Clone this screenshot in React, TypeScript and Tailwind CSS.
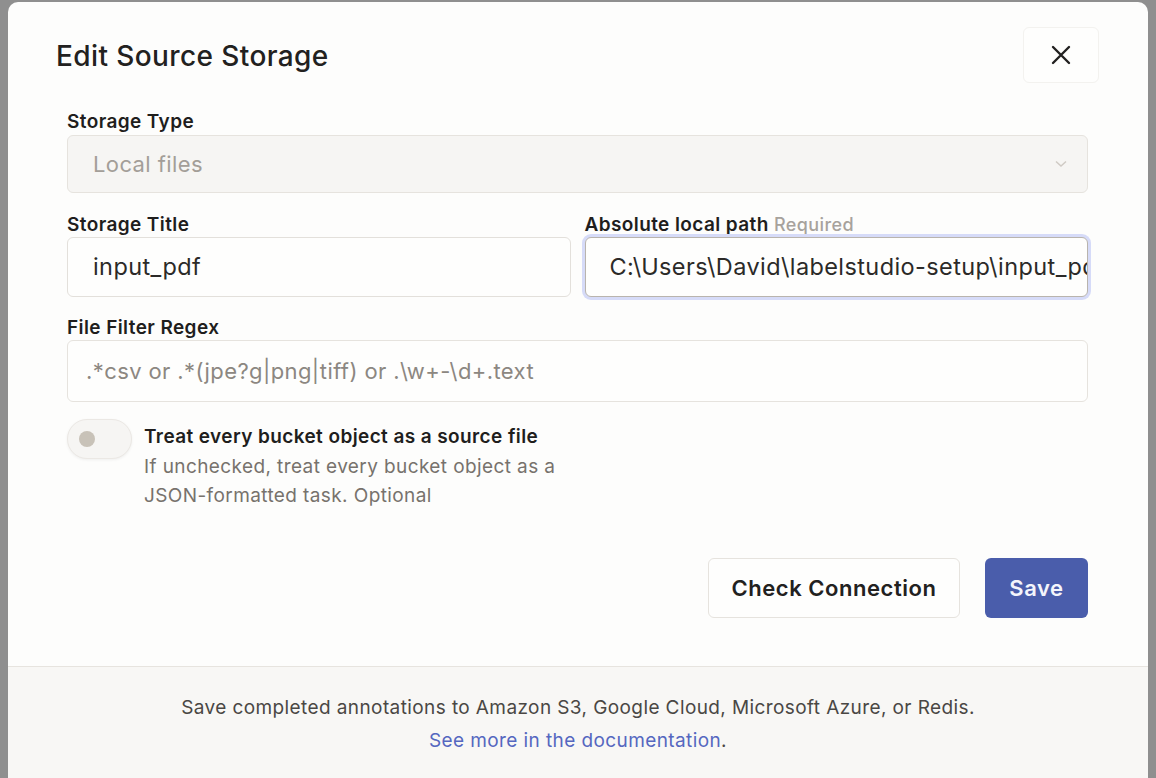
import React from "react";

export default function App() {
  return (
    <div
      className="h-[778px] w-[1156px] overflow-hidden bg-[#8f8f8f] pl-[8px] pr-[8px] pt-[2px] tracking-[0.025em]"
      style={{ fontFamily: "Inter, 'Noto Sans', sans-serif" }}
    >
      <div className="flex h-[800px] flex-col rounded-t-[10px] bg-[#fdfdfc]">
        <div className="flex items-start justify-between pl-[48px] pr-[49px] pt-[25px]">
          <h1 className="mt-[12px] text-[28px] font-medium leading-[34px] text-[#222120]">
            Edit Source Storage
          </h1>
          <button className="flex h-[56px] w-[76px] items-center justify-center rounded-[6px] border border-[#f3f2ef] bg-[#fefefd]">
            <svg width="20" height="20" viewBox="0 0 20 20">
              <path d="M2 2 L18 18 M18 2 L2 18" stroke="#222120" strokeWidth="2.4" strokeLinecap="round" />
            </svg>
          </button>
        </div>

        <div className="flex flex-col pl-[59px] pr-[60px] pt-[27px]">
          <label className="text-[19px] font-semibold leading-[24px] text-[#1f1e1d]">Storage Type</label>
          <div className="mt-[1px] flex h-[58px] items-center justify-between rounded-[6px] border border-[#e6e3de] bg-[#f6f5f3] pl-[25px] pr-[20px]">
            <span className="text-[22px] text-[#a39e98]">Local files</span>
            <svg width="12" height="8" viewBox="0 0 12 8">
              <path d="M1 1.5 L6 6 L11 1.5" fill="none" stroke="#cfcac4" strokeWidth="1.5" />
            </svg>
          </div>

          <div className="mt-[20px] grid grid-cols-2 gap-[14px]">
            <div className="flex flex-col">
              <label className="text-[19px] font-semibold leading-[24px] text-[#1f1e1d]">Storage Title</label>
              <div className="flex h-[60px] items-center rounded-[6px] border border-[#e3e0db] bg-[#fefefd] pl-[25px]">
                <span className="text-[23.5px] text-[#2b2a28]">input_pdf</span>
              </div>
            </div>
            <div className="flex flex-col">
              <label className="whitespace-nowrap text-[19px] font-semibold leading-[24px] text-[#1f1e1d]">
                Absolute local path <span className="text-[18px] font-medium text-[#a7a29c]">Required</span>
              </label>
              <div className="flex h-[60px] items-center overflow-hidden whitespace-nowrap rounded-[6px] border border-[#b9b4ad] bg-[#fefefd] pl-[24px] shadow-[0_0_0_3px_#d6dbf8]">
                <span className="text-[23.5px] text-[#2b2a28]">C:\Users\David\labelstudio-setup\input_pdf</span>
              </div>
            </div>
          </div>

          <label className="mt-[19px] text-[19px] font-semibold leading-[24px] text-[#1f1e1d]">File Filter Regex</label>
          <div className="flex h-[62px] items-center rounded-[6px] border border-[#e6e3de] bg-[#fefefd] pl-[18px]">
            <span className="text-[22px] text-[#8c8781]">.*csv or .*(jpe?g|png|tiff) or .\w+-\d+.text</span>
          </div>

          <div className="mt-[17px] flex items-start gap-[12px]">
            <div className="flex h-[40px] w-[65px] shrink-0 items-center rounded-full border border-[#ebe8e4] bg-[#f6f5f3] pl-[11px] shadow-[0_1px_3px_rgba(0,0,0,0.06)]">
              <div className="h-[16px] w-[16px] rounded-full bg-[#c8c2b8]" />
            </div>
            <div className="mt-[3px] flex flex-col">
              <span className="text-[19px] font-semibold leading-[30px] text-[#1f1e1d]">
                Treat every bucket object as a source file
              </span>
              <span className="w-[440px] text-[19px] leading-[29px] text-[#77726c]">
                If unchecked, treat every bucket object as a JSON-formatted task. Optional
              </span>
            </div>
          </div>

          <div className="mt-[48px] flex justify-end gap-[25px]">
            <button className="h-[60px] w-[252px] rounded-[6px] border border-[#e6e3de] bg-[#fefefd] text-[22px] font-semibold tracking-[0.025em] text-[#222120]">
              Check Connection
            </button>
            <button className="h-[60px] w-[103px] rounded-[6px] bg-[#4a5dab] text-[22px] font-semibold tracking-[0.025em] text-[#f4f5fb]">
              Save
            </button>
          </div>
        </div>

        <div className="mt-[48px] flex flex-1 flex-col items-center border-t border-[#e7e4df] bg-[#f8f7f5] pt-[24px] text-[19px] leading-[33px] text-[#4a4744]">
          <span>Save completed annotations to Amazon S3, Google Cloud, Microsoft Azure, or Redis.</span>
          <span>
            <a className="text-[#5567c0]">See more in the documentation</a>.
          </span>
        </div>
      </div>
    </div>
  );
}
